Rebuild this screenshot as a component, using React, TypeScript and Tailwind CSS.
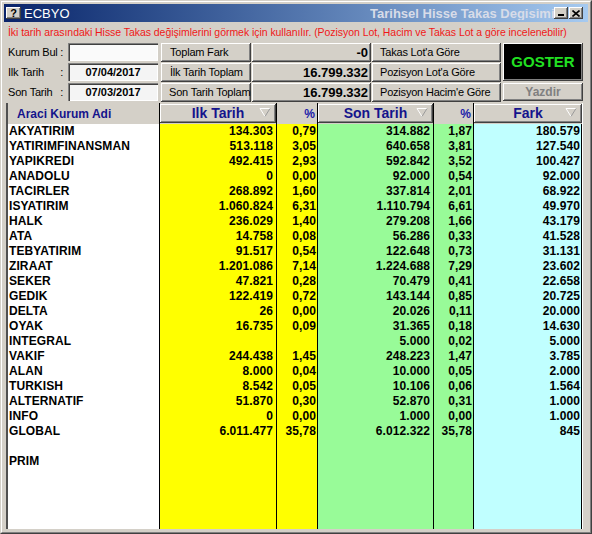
const raised =
  "shadow-[inset_-1px_-1px_0_#404040,inset_1px_1px_0_#ffffff,inset_-2px_-2px_0_#808080]";
const sunken =
  "shadow-[inset_1px_1px_0_#808080,inset_2px_2px_0_#404040,inset_-1px_-1px_0_#ffffff]";

type Row = [string, string, string, string, string, string];

const rows: Row[] = [
  ["AKYATIRIM", "134.303", "0,79", "314.882", "1,87", "180.579"],
  ["YATIRIMFINANSMAN", "513.118", "3,05", "640.658", "3,81", "127.540"],
  ["YAPIKREDI", "492.415", "2,93", "592.842", "3,52", "100.427"],
  ["ANADOLU", "0", "0,00", "92.000", "0,54", "92.000"],
  ["TACIRLER", "268.892", "1,60", "337.814", "2,01", "68.922"],
  ["ISYATIRIM", "1.060.824", "6,31", "1.110.794", "6,61", "49.970"],
  ["HALK", "236.029", "1,40", "279.208", "1,66", "43.179"],
  ["ATA", "14.758", "0,08", "56.286", "0,33", "41.528"],
  ["TEBYATIRIM", "91.517", "0,54", "122.648", "0,73", "31.131"],
  ["ZIRAAT", "1.201.086", "7,14", "1.224.688", "7,29", "23.602"],
  ["SEKER", "47.821", "0,28", "70.479", "0,41", "22.658"],
  ["GEDIK", "122.419", "0,72", "143.144", "0,85", "20.725"],
  ["DELTA", "26", "0,00", "20.026", "0,11", "20.000"],
  ["OYAK", "16.735", "0,09", "31.365", "0,18", "14.630"],
  ["INTEGRAL", "", "", "5.000", "0,02", "5.000"],
  ["VAKIF", "244.438", "1,45", "248.223", "1,47", "3.785"],
  ["ALAN", "8.000", "0,04", "10.000", "0,05", "2.000"],
  ["TURKISH", "8.542", "0,05", "10.106", "0,06", "1.564"],
  ["ALTERNATIF", "51.870", "0,30", "52.870", "0,31", "1.000"],
  ["INFO", "0", "0,00", "1.000", "0,00", "1.000"],
  ["GLOBAL", "6.011.477", "35,78", "6.012.322", "35,78", "845"],
  ["", "", "", "", "", ""],
  ["PRIM", "", "", "", "", ""],
];

const columns = [
  { idx: 1, w: "w-[117px]", bg: "bg-[#ffff00]", pr: "pr-[3px]", title: "Ilk Tarih" },
  { idx: 2, w: "w-[41px]", bg: "bg-[#ffff00]", pr: "pr-[1px]", title: "%" },
  { idx: 3, w: "w-[116px]", bg: "bg-[#98fb98]", pr: "pr-[3px]", title: "Son Tarih" },
  { idx: 4, w: "w-[40px]", bg: "bg-[#98fb98]", pr: "pr-[1px]", title: "%" },
  { idx: 5, w: "w-[109px] border-r", bg: "bg-[#c0ffff]", pr: "pr-[1px]", title: "Fark" },
];

function SortArrow() {
  return (
    <svg width="12" height="11" viewBox="0 0 12 11" className="shrink-0">
      <path d="M1 1.5 L6 9.5" stroke="#ffffff" strokeWidth="1" fill="none" />
      <path d="M1 1.5 L11 1.5" stroke="#ffffff" strokeWidth="1" fill="none" />
      <path d="M11 1.5 L6 9.5" stroke="#9a9a9a" strokeWidth="1" fill="none" />
    </svg>
  );
}

function HeaderCell({ title, w }: { title: string; w: string }) {
  if (title === "%") {
    return (
      <div className={`${w} flex items-center justify-end border-l border-black pr-[2px] text-[12px] font-bold text-[#1a1aa8]`}>
        %
      </div>
    );
  }
  return (
    <div className={`${w.replace(" border-r", "")} border-l border-black pt-[1px]`}>
      <div className={`relative flex h-[19px] items-center justify-center ${raised}`}>
        <span className="text-[14px] font-bold text-[#14148c]">{title}</span>
        <span className="absolute right-[5px] top-[3px]">
          <SortArrow />
        </span>
      </div>
    </div>
  );
}

function Label({ text }: { text: string }) {
  return (
    <div className="flex w-[55px] items-center justify-between whitespace-nowrap text-[11px] tracking-[-0.2px] text-black">
      <span>{text}</span>
      <span>:</span>
    </div>
  );
}

function Btn({ text, w, pl }: { text: string; w: string; pl: string }) {
  return (
    <div className={`${w} ${pl} flex h-[19px] items-center overflow-hidden whitespace-nowrap bg-[#d4d0c8] text-[11px] tracking-[-0.2px] text-black ${raised}`}>
      {text}
    </div>
  );
}

function Value({ text }: { text: string }) {
  return (
    <div className={`flex h-[19px] w-[119px] items-center justify-end pr-[3px] text-[13px] font-bold text-black ${raised}`}>
      {text}
    </div>
  );
}

function DateBox({ text, bg }: { text: string; bg: string }) {
  return (
    <div className={`flex h-[18px] w-[90px] items-center justify-center ${bg} text-[11px] font-bold text-black ${sunken}`}>
      {text}
    </div>
  );
}

export default function App() {
  return (
    <div className="h-[534px] w-[592px] overflow-hidden border border-t-[#d4d0c8] border-l-[#d4d0c8] border-r-[#404040] border-b-[#404040] bg-[#d4d0c8] font-['Liberation_Sans',Arial,sans-serif]">
      <div className="flex h-full flex-col border border-t-white border-l-white border-r-[#808080] border-b-[#808080] p-[2px]">
        {/* title bar */}
        <div className="flex h-[18px] shrink-0 items-center bg-linear-to-r from-[#0a246a] to-[#a6caf0] pl-[2px] pr-[5px]">
          <div className={`flex h-[12px] w-[15px] items-center justify-center bg-[#d4d0c8] text-[11px] font-bold leading-none text-black ${raised}`}>
            ?
          </div>
          <span className="ml-[3px] text-[13px] leading-none text-white">ECBYO</span>
          <div className="flex-1" />
          <div className="w-[184px] overflow-hidden whitespace-nowrap text-[13px] font-bold leading-none text-[#d8dce8]">
            Tarihsel Hisse Takas Degisimi
          </div>
          <div className={`relative h-[12px] w-[14px] bg-[#d4d0c8] ${raised}`}>
            <div className="absolute bottom-[3px] left-[4px] h-[2px] w-[6px] bg-black" />
          </div>
          <div className={`ml-[1px] flex h-[12px] w-[14px] items-center justify-center bg-[#d4d0c8] ${raised}`}>
            <svg width="8" height="7" viewBox="0 0 8 7">
              <path d="M0.5 0.5 L7.5 6.5 M7.5 0.5 L0.5 6.5" stroke="#000" strokeWidth="1.6" />
            </svg>
          </div>
        </div>

        {/* hint */}
        <div className="flex h-[21px] shrink-0 items-center whitespace-nowrap pl-[4px] text-[10.5px] tracking-[-0.05px] text-[#f01818]">
          İki tarih arasındaki Hisse Takas değişimlerini görmek için kullanılır. (Pozisyon Lot, Hacim ve Takas Lot a göre incelenebilir)
        </div>

        {/* filters */}
        <div className="grid shrink-0 grid-cols-[60px_93px_91px_120px_131px_80px] grid-rows-[19px_19px_19px] gap-y-[1px] pl-[4px]">
          <Label text="Kurum Bul" />
          <div className={`h-[18px] w-[90px] bg-[#fafafa] ${sunken}`} />
          <Btn text="Toplam Fark" w="w-[90px]" pl="pl-[9px]" />
          <Value text="-0" />
          <Btn text="Takas Lot'a Göre" w="w-[129px]" pl="pl-[8px]" />
          <div className={`row-span-2 flex h-[38px] items-center justify-center bg-black text-[15px] font-bold text-[#22e022] ${raised}`}>
            GOSTER
          </div>

          <Label text="Ilk Tarih" />
          <DateBox text="07/04/2017" bg="bg-[#f4f4f4]" />
          <Btn text="İlk Tarih Toplam" w="w-[90px]" pl="pl-[9px]" />
          <Value text="16.799.332" />
          <Btn text="Pozisyon Lot'a Göre" w="w-[129px]" pl="pl-[8px]" />

          <Label text="Son Tarih" />
          <DateBox text="07/03/2017" bg="bg-[#f4f4f4]" />
          <Btn text="Son Tarih Toplam" w="w-[90px]" pl="pl-[8px]" />
          <Value text="16.799.332" />
          <Btn text="Pozisyon Hacim'e Göre" w="w-[129px]" pl="pl-[8px]" />
          <div className={`flex h-[18px] items-center justify-center bg-[#d4d0c8] text-[12px] font-bold text-[#808080] ${raised}`}>
            Yazdir
          </div>
        </div>

        {/* grid */}
        <div className="mb-[1px] ml-[2px] mr-[5px] mt-[1px] flex flex-1 flex-col overflow-hidden border-l-2 border-l-[#505050] border-r border-r-white">
          <div className="flex h-[21px] shrink-0">
            <div className="flex w-[151px] items-center pl-[9px] text-[12px] font-bold text-[#14148c]">
              Araci Kurum Adi
            </div>
            {columns.map((c) => (
              <HeaderCell key={c.idx} title={c.title} w={c.w} />
            ))}
          </div>
          <div className="flex flex-1">
            <div className="w-[151px] bg-white pl-[1px]">
              {rows.map((r, i) => (
                <div key={i} className="h-[15px] whitespace-nowrap text-[12px] font-bold leading-[15px] tracking-[0.1px] text-black">
                  {r[0]}
                </div>
              ))}
            </div>
            {columns.map((c) => (
              <div key={c.idx} className={`${c.w} border-l border-black ${c.bg} ${c.pr}`}>
                {rows.map((r, i) => (
                  <div key={i} className="h-[15px] text-right text-[12px] font-bold leading-[15px] tracking-[0.1px] text-black">
                    {r[c.idx]}
                  </div>
                ))}
              </div>
            ))}
          </div>
        </div>
      </div>
    </div>
  );
}
